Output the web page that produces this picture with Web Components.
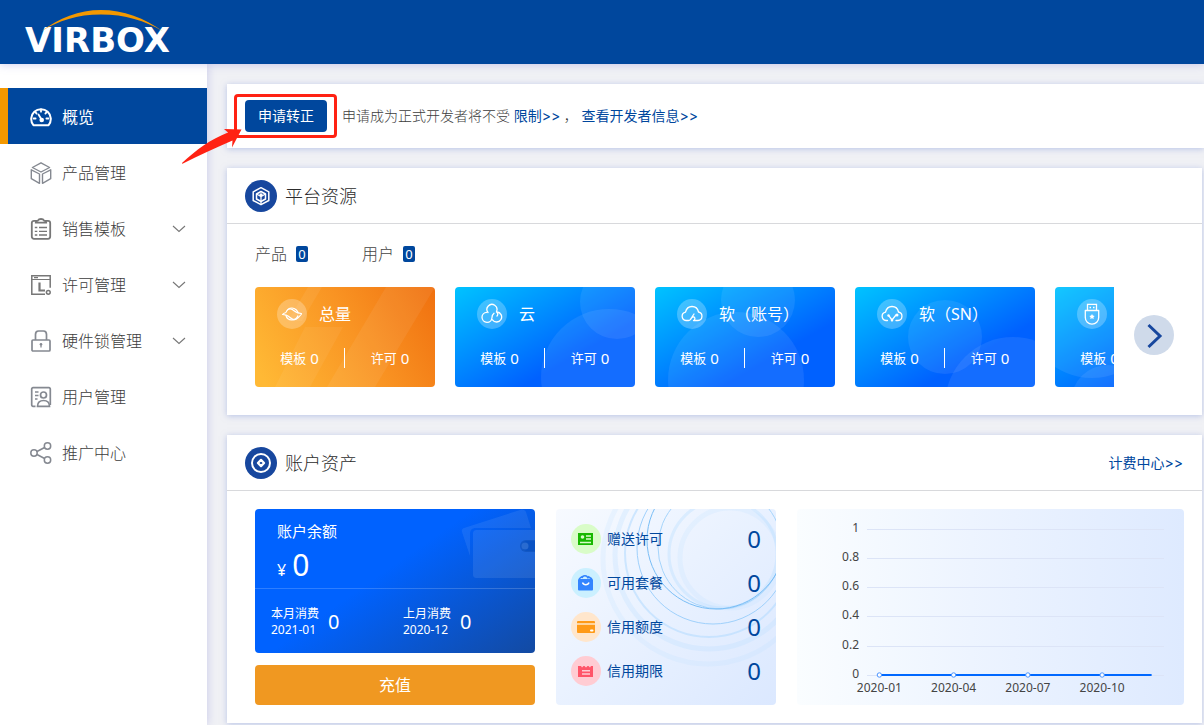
<!DOCTYPE html>
<html lang="zh-CN">
<head>
<meta charset="utf-8">
<meta name="viewport" content="width=device-width, initial-scale=1">
<title>Virbox 概览</title>
<style>
  :root {
    --brand: #00479d;
    --accent: #f39800;
    --text: #3c3c3c;
  }
  body {
    margin: 0;
    background: #f0f1f5;
    color: var(--text);
    font: 300 14px/20px "Noto Sans", "Noto Sans CJK SC", sans-serif;
  }
</style>
</head>
<body>
<vb-app></vb-app>

<script>
const define = (name, html, setup) => {
  const template = document.createElement('template');
  template.innerHTML = html;
  customElements.define(name, class extends HTMLElement {
    constructor() {
      super();
      this.attachShadow({ mode: 'open' });
    }
    connectedCallback() {
      if (this.shadowRoot.childNodes.length) return;
      this.shadowRoot.append(template.content.cloneNode(true));
      if (setup) setup.call(this, this.shadowRoot);
    }
  });
};

const makeIcon = (name, className = '') => {
  const icon = document.createElement('vb-icon');
  icon.setAttribute('name', name);
  icon.className = className;
  return icon;
};

const ICONS = {
  gauge: ['0 0 22 22', '<g fill="none" stroke="currentColor" stroke-width="2" stroke-linecap="round"><path d="M3.4 19.2A9.8 9.8 0 1 1 18.6 19.2Z" stroke-linejoin="round"/><path d="M11 3.5v2.200M5.300 6.200l1.300 1.300M16.700 6.200l-1.300 1.300M3.600 12.500h2M16.400 12.500h2M8.500 8.500l2.600 4.200" stroke-width="1.800"/></g><circle cx="11.700" cy="14" r="2.300" fill="currentColor"/>'],
  box: ['0 0 22 22', '<g fill="none" stroke="#858991" stroke-width="1.4" stroke-linejoin="round"><path d="M11 .8 19.6 5.5 11 10 2.4 5.5Z"/><path d="M1.3 7.8 9.5 12v9.3L1.3 16.7Z"/><path d="M20.7 7.8 12.5 12v9.3l8.2-4.6Z"/></g>'],
  clipboard: ['0 0 22 22', '<g fill="none" stroke="#777" stroke-width="1.8"><path d="M7 2.8H4a2.2 2.2 0 0 0-2.2 2.2v13.5A2.2 2.2 0 0 0 4 20.8h14a2.2 2.2 0 0 0 2.2-2.2V5A2.2 2.2 0 0 0 18 2.8h-3"/><path d="M5.8 4.6c0-1.5 1-2 2-2 .6-1 1.6-1.6 3.2-1.6s2.6.6 3.2 1.6c1 0 2 .5 2 2Z"/><path d="M4.8 9.5h2.500M9 9.500h8M4.800 13.300h2.500M9 13.300h8M4.800 17h2.500M9 17h8" stroke-width="1.300"/></g>'],
  license: ['0 0 22 22', '<g fill="none" stroke="#777"><path d="M15 20.3H1.8V1.7h18.4v12" stroke-width="1.5"/><path d="M1.5 5.500h19M4 3.700h4" stroke-width="1.200"/><path d="M9.500 8.500v8h5.500" stroke-width="2.200"/><circle cx="18.300" cy="18.300" r="1.900" stroke-width="1.500"/></g>'],
  lock: ['0 0 22 22', '<g fill="none" stroke="#858991" stroke-width="1.700"><rect x="2" y="10" width="18" height="11" rx="1"/><path d="M5.500 10V4.500C5.500 2.500 6.500 1 8.500 1h5c2 0 3 1.500 3 3.500V10"/><path d="M11 14.500v3" stroke-width="1.300"/></g><circle cx="11" cy="14.200" r="1.300" fill="#858991"/>'],
  user: ['0 0 22 22', '<g fill="none" stroke="#858991" stroke-width="1.700"><path d="M5.500 20.300H3A1.300 1.300 0 0 1 1.700 19V3A1.300 1.300 0 0 1 3 1.700h16A1.300 1.300 0 0 1 20.300 3v16"/><path d="M5 6h3.500M5 9.500h3.500M5 13h2.500" stroke-width="1.400"/><circle cx="13.500" cy="9" r="3"/><path d="M7.500 20.300c0-4 2.500-5.800 6-5.800s6 1.800 6 5.800Z"/></g>'],
  share: ['0 0 22 22', '<g fill="none" stroke="#858991" stroke-width="1.500"><circle cx="4" cy="11" r="3.200"/><circle cx="17.500" cy="4" r="3.200"/><circle cx="17.500" cy="18" r="3.200"/><path d="m7 9.500 7.600-4M7 12.500l7.600 4"/></g>'],
  chevron: ['0 0 14 8', '<path d="m1 1 6 5.500L13 1" fill="none" stroke="#777" stroke-width="1.100"/>'],
  platform: ['0 0 32 32', '<circle cx="16" cy="16" r="16" fill="#17479e"/><g fill="none" stroke="#fff" stroke-width="1.500" stroke-linejoin="round"><path d="M16 7.700 23.800 11.800v8.700L16 24.700 8.200 20.500v-8.700Z"/><path d="m11.500 14 4.500-2.500 4.500 2.500v5L16 21.500 11.500 19Z"/><path d="m11.500 14 4.500 2.500 4.500-2.500M16 16.500V24" stroke-width="1.300"/></g><circle cx="16" cy="15" r="1.700" fill="#fff"/>'],
  asset: ['0 0 32 32', '<circle cx="16" cy="16" r="16" fill="#17479e"/><g fill="none" stroke="#fff"><circle cx="16" cy="16" r="9" stroke-width="2"/><path d="m16 12.900 3.100 3.100-3.100 3.100-3.100-3.100Z" stroke-width="2.200" stroke-linejoin="round"/></g>'],
  planet: ['0 0 22 22', '<g fill="none" stroke="#fff" stroke-width="1.200" stroke-linejoin="round"><path d="M5 9.500C6 6.500 8 5 11 5s6 3 6.200 5.500M17 12.500c-1 3-3 4.500-6 4.500s-5.500-2-6.200-5"/><path d="M5 9.500C3 10 2 10.800 1.500 11.500 5 11.500 6.500 12 9 14.500s5 3 8 .2 3.500-3.500 3.500-4C17 10.500 15.500 10 13 7.700S8 5 6 7.500"/></g>'],
  clouds: ['0 0 22 22', '<g fill="none" stroke="#fff" stroke-width="1.300" stroke-linecap="round"><path d="M7 9.500a5 5 0 1 1 8.500-1"/><path d="M5.800 9.300A5 5 0 1 0 11 14.500c0-2 .5-3 2-4.200"/><path d="M16 9a5 5 0 1 1-4.500 7.800M15.500 9c1.500 1 1.600 3 .5 4"/></g>'],
  account: ['0 0 22 22', '<path d="M7.500 17.500H5a4.200 4.200 0 0 1-.5-8.300C5.300 5.600 8 3.500 11 3.500s5.800 2 6.500 5.500A4.300 4.300 0 0 1 17 17.500h-4.500c3-1.500.5-5-1.500-3s-1.500 3-3.500 3M13 11l-2 3" fill="none" stroke="#fff" stroke-width="1.300" stroke-linecap="round" stroke-linejoin="round"/>'],
  serial: ['0 0 22 22', '<g fill="none" stroke="#fff" stroke-width="1.300" stroke-linecap="round"><path d="M6.500 17.500H5a4.200 4.200 0 0 1-.5-8.300C5.300 5.600 8 3.500 11 3.500s5.800 2 6.500 5.500A4.300 4.300 0 0 1 17 17.500h-2M8 13l3 4 4-5M11 17.500v.5"/></g><g fill="#fff"><circle cx="7.500" cy="12.500" r="1.200"/><circle cx="16" cy="12" r="1.500"/><circle cx="11" cy="17" r="1.300"/></g>'],
  usb: ['0 0 22 22', '<g fill="none" stroke="#fff" stroke-width="1.300"><path d="M6.500 7.500V1.300h9v6.200"/><path d="M4.300 7.500h13.400v7a6.700 6.700 0 0 1-13.400 0Z" stroke-linejoin="round"/></g><path d="M8.500 4.500h1.500M12 4.500h1.500" stroke="#fff" stroke-width="1.500"/><path d="m11 11 .9 1.600 1.800.3-1.300 1.300.3 1.800-1.700-.8-1.700.8.300-1.800-1.300-1.300 1.800-.3Z" fill="#fff"/>'],
  gift: ['0 0 30 30', '<circle cx="15" cy="15" r="15" fill="#d9fcc8"/><rect x="7" y="9" width="15" height="12" fill="#18b800"/><circle cx="11.500" cy="13" r="1.800" fill="#d9fcc8"/><path d="M15 12h5M15 15h5M9 18.500h11" stroke="#d9fcc8" stroke-width="1.400"/>'],
  bag: ['0 0 30 30', '<circle cx="15" cy="15" r="15" fill="#cbf0ff"/><rect x="7" y="11" width="15" height="11.500" rx="1" fill="#3385ff"/><path d="m8 11 3-2.500M11 10c.5-3 5.500-3 6 .5M17 8.500l4 2.500" fill="none" stroke="#3385ff" stroke-width="1.600"/><path d="M11.500 14.500c1 3 5.500 3 6.500 0" fill="none" stroke="#fff" stroke-width="1.400"/>'],
  credit: ['0 0 30 30', '<circle cx="15" cy="15" r="15" fill="#ffe6cc"/><rect x="6" y="9" width="18" height="12" rx="1" fill="#ff9a17"/><path d="M6 12h18" stroke="#ffd49b" stroke-width="2"/><rect x="19" y="17.500" width="3.500" height="2" rx="1" fill="#fff"/>'],
  term: ['0 0 30 30', '<circle cx="15" cy="15" r="15" fill="#ffccd3"/><path d="M7 10h3l1 1.500L12.500 10h1L15 11.500 16.500 10h1l1.500 1.500L20 10h2v11H7Z" fill="#ff5569"/><path d="M11 14.800h8M11 18h8" stroke="#ffccd3" stroke-width="1.500"/>']
};

define('vb-icon', `
  <style>
    :host { display: block; flex: none; width: 22px; height: 22px; }
    svg { display: block; width: 100%; height: 100%; }
  </style>
  <svg aria-hidden="true"></svg>`,
function (root) {
  const [box, body] = ICONS[this.getAttribute('name')];
  const svg = root.querySelector('svg');
  svg.setAttribute('viewBox', box);
  svg.innerHTML = body;
});

define('vb-logo', `
  <style>
    :host { display: block; position: relative; width: 152px; height: 48px; color: #fff; }
    svg { position: absolute; left: 16px; top: 2px; width: 122px; height: 22px; }
    span { display: block; padding-top: 12px; font: bold 34px/40px "DejaVu Sans", sans-serif; }
  </style>
  <span>VIRBOX</span>
  <svg viewBox="0 0 122 22" aria-hidden="true"><path d="M0 21.500C18 8 38 0 60 0s44 8 62 21.500C104 10.500 84 4.500 60 4.500S18 10.500 0 21.500Z" fill="#f39800"/></svg>`);

define('vb-nav-item', `
  <style>
    :host { display: block; }
    a {
      display: flex; align-items: center; gap: 10px; box-sizing: border-box; height: 56px;
      padding: 2px 21px 0 22px; border-left: 8px solid transparent;
      color: var(--text); font-size: 16px; line-height: 24px; text-decoration: none;
    }
    a.active { background: var(--brand); border-color: var(--accent); color: #fff; font-weight: 400; }
    span { flex: 1; }
    .arrow { width: 14px; height: 8px; }
  </style>
  <a href="#"><span><slot></slot></span></a>`,
function (root) {
  const link = root.querySelector('a');
  link.prepend(makeIcon(this.getAttribute('icon')));
  if (this.hasAttribute('active')) {
    link.classList.add('active');
    link.setAttribute('aria-current', 'page');
  }
  if (this.hasAttribute('expandable')) link.append(makeIcon('chevron', 'arrow'));
});

define('vb-card', `
  <style>
    :host { display: block; background: #fff; box-shadow: 0 1px 6px rgba(130, 150, 215, .5); }
    header {
      display: flex; align-items: center; gap: 8px; box-sizing: border-box; height: 56px;
      padding: 0 19px 0 18px; border-bottom: 1px solid #d8d9dc;
    }
    h2 { flex: 1; margin: 0; font-size: 18px; font-weight: 300; line-height: 28px; color: #2c2c2c; }
    .icon { width: 32px; height: 32px; }
  </style>
  <header><h2></h2><slot name="action"></slot></header>
  <slot></slot>`,
function (root) {
  root.querySelector('header').prepend(makeIcon(this.getAttribute('icon'), 'icon'));
  root.querySelector('h2').textContent = this.getAttribute('heading');
});

define('vb-notice', `
  <style>
    :host {
      display: flex; align-items: center; position: relative; height: 64px; padding-left: 18px;
      background: #fff; box-shadow: 0 1px 6px rgba(130, 150, 215, .5);
    }
    button {
      height: 32px; padding: 0 13px; border: 0; border-radius: 4px; margin-right: 15px;
      background: var(--brand); color: #fff; font: inherit; font-weight: 400;
    }
    p { margin: 0; white-space: pre; }
    a { color: var(--brand); text-decoration: none; font-family: Inter, "Noto Sans CJK SC", sans-serif; font-weight: 400; }
    .frame {
      position: absolute; left: 7px; top: 10px; box-sizing: border-box; width: 103px; height: 44px;
      border: 3px solid #ff2213; border-radius: 4px;
    }
    .pointer { position: absolute; left: -46px; top: 44px; width: 62px; height: 38px; }
  </style>
  <button type="button">申请转正</button>
  <p>申请成为正式开发者将不受 <a href="#">限制&gt;&gt;</a> ， <a href="#">查看开发者信息&gt;&gt;</a></p>
  <div class="frame"></div>
  <svg class="pointer" viewBox="0 0 62 38" aria-hidden="true"><path d="M60.500 1.500 43 1l4 3.500C30 11 15 22 1 35c0 .7.500 1 1 .6C17 28 34 20 51.500 12.500l-.5 7Z" fill="#ff2213"/></svg>`);

define('vb-stat', `
  <style>
    :host { display: flex; align-items: center; gap: 9px; font-size: 16px; line-height: 24px; color: #444; }
    b {
      width: 12px; height: 16px; border-radius: 2px; background: var(--brand); color: #fff;
      font-size: 13px; font-weight: 400; line-height: 16px; text-align: center;
    }
  </style>
  <slot></slot><b>0</b>`);

const TILE_ART = {
  planet: '<path d="M53 0h14L47 34H33Z" opacity=".8"/><path d="M50 40h38L55 100H20Z" opacity=".7"/><path d="M131 0h49l-60 100H72Z" opacity=".8"/>',
  clouds: '<circle cx="162" cy="15" r="37"/><circle cx="154" cy="90" r="68"/>',
  account: '<circle cx="103" cy="13" r="37"/><circle cx="81" cy="93" r="68"/>',
  serial: '<circle cx="90" cy="50" r="37"/><circle cx="158" cy="118" r="68"/>',
  usb: '<circle cx="37" cy="23" r="68"/><circle cx="53" cy="115" r="37"/>'
};

define('vb-tile', `
  <style>
    :host {
      display: flex; flex-direction: column; flex: none; box-sizing: border-box; width: 180px; height: 100px;
      padding: 12px 0 0; gap: 19px; position: relative; overflow: hidden; border-radius: 4px; color: #fff;
      background: linear-gradient(150deg, #00c3ff 0%, #0061ff 68%, #0061ff 100%);
    }
    :host([warm]) { background: linear-gradient(60deg, #ffb935 5%, #f99423 55%, #f0700f 100%); }
    .art { position: absolute; left: 0; top: 0; width: 180px; height: 100px; fill: rgba(255, 255, 255, .08); }
    .head, dl { position: relative; }
    .head { display: flex; align-items: center; gap: 12px; padding-left: 22px; font-size: 16px; line-height: 24px; font-weight: 400; }
    .disc { display: grid; place-items: center; width: 30px; height: 30px; border-radius: 50%; background: rgba(255, 255, 255, .25); }
    dl { display: flex; margin: 0; line-height: 20px; font-weight: 400; }
    dl div { flex: none; display: flex; gap: 4px; justify-content: center; box-sizing: border-box; width: 50%; }
    dl div:first-child { border-right: 1px solid #fff; }
    dt { font-size: 13px; }
    dd { margin: 0; font-size: 15px; }
  </style>
  <svg class="art" viewBox="0 0 180 100" aria-hidden="true"></svg>
  <div class="head"><span class="disc"></span><slot></slot></div>
  <dl><div><dt>模板</dt><dd>0</dd></div><div><dt>许可</dt><dd>0</dd></div></dl>`,
function (root) {
  const name = this.getAttribute('icon');
  root.querySelector('.disc').append(makeIcon(name));
  root.querySelector('.art').innerHTML = TILE_ART[name];
});

define('vb-resources', `
  <style>
    :host { display: block; padding: 18px 28px 28px; }
    .stats { display: flex; gap: 54px; margin-bottom: 21px; }
    .carousel { display: flex; align-items: center; gap: 20px; }
    .view { display: flex; flex: 1; gap: 20px; min-width: 0; overflow: hidden; }
    button { flex: none; width: 40px; height: 40px; padding: 0; border: 0; border-radius: 50%; margin-bottom: 4px; background: #cfdaea; }
    svg { display: block; }
  </style>
  <div class="stats"><vb-stat>产品</vb-stat><vb-stat>用户</vb-stat></div>
  <div class="carousel">
    <div class="view">
      <vb-tile icon="planet" warm>总量</vb-tile>
      <vb-tile icon="clouds">云</vb-tile>
      <vb-tile icon="account">软（账号）</vb-tile>
      <vb-tile icon="serial">软（SN）</vb-tile>
      <vb-tile icon="usb"></vb-tile>
    </div>
    <button type="button" aria-label="下一组"><svg width="40" height="40" viewBox="0 0 40 40"><path d="m14.500 10 11.500 11-11.500 11" fill="none" stroke="#17479e" stroke-width="3"/></svg></button>
  </div>`);

define('vb-balance', `
  <style>
    :host { display: flex; flex-direction: column; gap: 12px; width: 280px; flex: none; }
    section {
      position: relative; height: 144px; overflow: hidden; border-radius: 4px; color: #fff; font-weight: 400;
      background: linear-gradient(145deg, #0062ff 45%, #134aa2 100%);
    }
    .wallet { position: absolute; right: 0; top: 0; width: 74px; height: 72px; }
    .total { box-sizing: border-box; height: 80px; padding: 12px 22px 0; border-bottom: 1px solid rgba(255, 255, 255, .18); }
    h3 { margin: 0; font-size: 15px; font-weight: 400; line-height: 20px; }
    .sum { display: flex; align-items: baseline; gap: 6px; margin: 6px 0 0; font-size: 16px; line-height: 36px; }
    .sum b { font-size: 30px; font-weight: 400; }
    .months { display: flex; padding: 17px 0 0 16px; }
    .months div { display: flex; flex: none; align-items: center; gap: 9px; width: 132px; font-size: 12px; line-height: 16px; }
    .months b { font-size: 20px; font-weight: 400; }
    button { height: 40px; border: 0; border-radius: 4px; background: #f09821; color: #fff; font: inherit; font-size: 16px; font-weight: 400; }
  </style>
  <section>
    <svg class="wallet" viewBox="0 0 74 72" aria-hidden="true">
      <path d="m9 47-8-24c-.500-2 0-3 2-4L59 1c3-1 5 0 6 2l5 16H15c-4 0-6 2-6 6Z" fill="#fff" opacity=".08"/>
      <path d="M12 25c0-3 1-4 4-4h60v11H66a5 5 0 0 0 0 10h10v27H16c-3 0-4-1-4-4Z" fill="#fff" opacity=".09"/>
      <path d="M74 31h-9a6 6 0 0 0 0 12h9Z" fill="#0b4fb5" opacity=".6"/><circle cx="64" cy="37" r="3.500" fill="#2a6bd0"/>
    </svg>
    <div class="total"><h3>账户余额</h3><p class="sum">¥ <b>0</b></p></div>
    <div class="months">
      <div><span>本月消费<br>2021-01</span><b>0</b></div>
      <div><span>上月消费<br>2020-12</span><b>0</b></div>
    </div>
  </section>
  <button type="button">充值</button>`);

define('vb-credits', `
  <style>
    :host {
      display: block; position: relative; flex: none; box-sizing: border-box; width: 220px; height: 196px; padding: 8px 15px;
      overflow: hidden; border-radius: 4px; background: linear-gradient(135deg, #f7faff 0%, #eaf2ff 45%, #dbe8ff 100%);
    }
    .rings { position: absolute; left: 0; top: 0; width: 220px; height: 196px; }
    ul { position: relative; margin: 0; padding: 0; list-style: none; }
    li { display: flex; align-items: center; gap: 6px; height: 44px; color: var(--brand); font-weight: 400; }
    vb-icon { width: 30px; height: 30px; }
    b { margin-left: auto; font-size: 24px; font-weight: 400; }
  </style>
  <svg class="rings" viewBox="0 0 220 196" fill="none" aria-hidden="true">
    <g stroke="#b5dcff"><circle cx="153" cy="44" r="84" stroke-width="2" opacity=".6"/><circle cx="153" cy="46" r="94" stroke-width="5" opacity=".25"/><circle cx="152" cy="50" r="105" stroke-width="5" opacity=".18"/><circle cx="167" cy="45" r="54" stroke-width="3" opacity=".35"/><circle cx="174" cy="49" r="50" stroke-width="5" opacity=".18"/></g>
    <circle cx="157" cy="39" r="76" stroke="#9fd0fb"/>
    <circle cx="164" cy="38" r="62" stroke="#a5d4fb"/>
    <circle cx="160" cy="31" r="69" stroke="#79bdf5"/>
  </svg>
  <ul>
    <li><vb-icon name="gift"></vb-icon>赠送许可<b>0</b></li>
    <li><vb-icon name="bag"></vb-icon>可用套餐<b>0</b></li>
    <li><vb-icon name="credit"></vb-icon>信用额度<b>0</b></li>
    <li><vb-icon name="term"></vb-icon>信用期限<b>0</b></li>
  </ul>`);

define('vb-trend', `
  <style>
    :host {
      display: block; flex: 1; min-width: 0; padding: 0 20px 0 70px; border-radius: 4px;
      background: linear-gradient(90deg, #fafdff 0%, #edf4ff 45%, #deeaff 100%);
    }
    svg { display: block; width: 100%; height: 196px; overflow: visible; }
    text { fill: #444; font-size: 12px; font-weight: 400; }
  </style>
  <svg role="img" aria-label="月度消费"></svg>`,
function (root) {
  const rows = [['1', 20], ['0.8', 49], ['0.6', 78], ['0.4', 107], ['0.2', 137], ['0', 166]];
  const months = ['2020-01', '2020-04', '2020-07', '2020-10'];
  const at = index => (index * 3 + .5) / 12 * 100 + '%';
  root.querySelector('svg').innerHTML =
    rows.map(([label, y]) => `<line x1="0" x2="100%" y1="${y}" y2="${y}" stroke="#dce4f7" shape-rendering="crispEdges"/><text x="-8" y="${y + 3}" text-anchor="end">${label}</text>`).join('') +
    `<line x1="${at(0)}" x2="${11.5 / 12 * 100}%" y1="166" y2="166" stroke="#0068ff" stroke-width="2"/>` +
    months.map((label, i) => `<circle cx="${at(i)}" cy="166" r="2.200" fill="#fff" stroke="#4a94ff"/><text x="${at(i)}" y="183" text-anchor="middle">${label}</text>`).join('');
});

define('vb-app', `
  <style>
    :host { display: flex; flex-direction: column; min-height: 100vh; }
    .top { position: relative; display: flex; align-items: center; height: 64px; padding-left: 25px; background: var(--brand); box-shadow: 0 1px 8px rgba(130, 130, 215, .35); }
    .body { display: flex; flex: 1; }
    nav { flex: none; width: 207px; padding-top: 24px; background: #fff; box-shadow: 1px 0 8px rgba(130, 130, 215, .3); }
    main { display: flex; flex-direction: column; gap: 20px; flex: 1; min-width: 0; padding: 20px 0 2px 20px; }
    vb-card { margin-right: 2px; }
    .assets { display: flex; gap: 21px; padding: 18px 18px 18px 28px; }
    a { color: var(--brand); text-decoration: none; font-family: Inter, "Noto Sans CJK SC", sans-serif; font-weight: 400; }
  </style>
  <header class="top"><vb-logo></vb-logo></header>
  <div class="body">
    <nav>
      <vb-nav-item icon="gauge" active>概览</vb-nav-item>
      <vb-nav-item icon="box">产品管理</vb-nav-item>
      <vb-nav-item icon="clipboard" expandable>销售模板</vb-nav-item>
      <vb-nav-item icon="license" expandable>许可管理</vb-nav-item>
      <vb-nav-item icon="lock" expandable>硬件锁管理</vb-nav-item>
      <vb-nav-item icon="user">用户管理</vb-nav-item>
      <vb-nav-item icon="share">推广中心</vb-nav-item>
    </nav>
    <main>
      <vb-notice></vb-notice>
      <vb-card icon="platform" heading="平台资源"><vb-resources></vb-resources></vb-card>
      <vb-card icon="asset" heading="账户资产">
        <a slot="action" href="#">计费中心&gt;&gt;</a>
        <div class="assets"><vb-balance></vb-balance><vb-credits></vb-credits><vb-trend></vb-trend></div>
      </vb-card>
    </main>
  </div>`);
</script>
</body>
</html>
